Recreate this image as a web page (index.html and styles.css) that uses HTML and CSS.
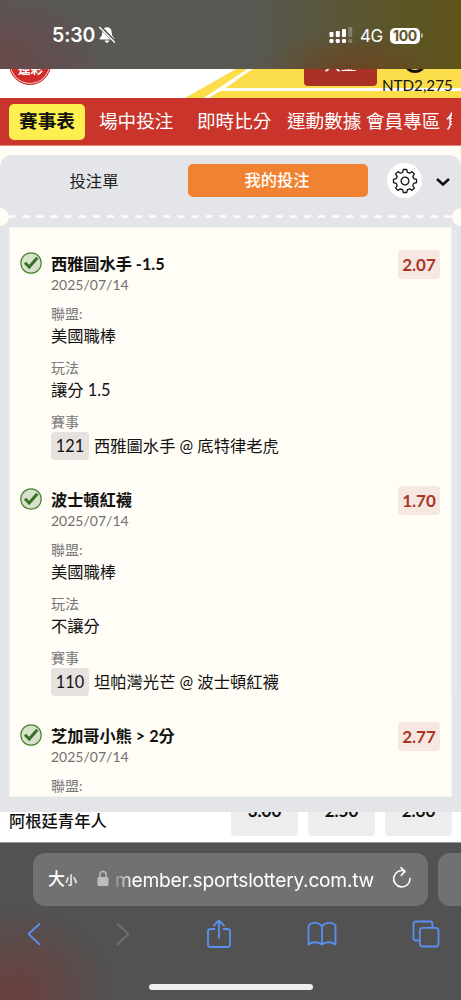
FILE: index.html
```
<!DOCTYPE html>
<html lang="zh-Hant">
<head>
<meta charset="utf-8">
<title>運彩</title>
<link rel="stylesheet" href="styles.css">
</head>
<body>
<div class="screen">
  <header class="status">
    <div class="status-left">
      <span class="clock">5:30</span>
      <svg width="18" height="18" viewBox="0 0 18 18"><path d="M9 1.2c-3 0-4.600 2-4.700 5-.1 3-.8 4.300-2.300 5.500-.8.700-.6 1.700.4 1.700h13.200c1 0 1.200-1 .4-1.700-1.500-1.200-2.200-2.500-2.300-5.500-.1-3-1.700-5-4.700-5zM6.800 14.500c.2 1.400 1 2.200 2.200 2.200s2-.8 2.200-2.200z" fill="#fff"/><path d="M2.300.8l14.200 14.800" stroke="#585854" stroke-width="3.200"/><path d="M1.500 1.200l15 15" stroke="#fff" stroke-width="1.300" stroke-linecap="round"/></svg>
    </div>
    <div class="status-right">
      <svg width="24" height="18" viewBox="0 0 24 18"><g fill="#fff"><rect x=".5" y="5" width="4" height="5" rx="1"/><rect x="6.800" y="4" width="4" height="6" rx="1"/><rect x="13" y="2" width="4" height="8" rx="1"/><rect x=".5" y="12" width="4" height="4" rx="1.300"/><rect x="6.800" y="12" width="4" height="4" rx="1.300"/><rect x="13" y="12" width="4" height="4" rx="1.300"/></g><g fill="#fff" opacity=".25"><rect x="19.300" y="0" width="4" height="10" rx="1"/><rect x="19.300" y="12" width="4" height="4" rx="1.300"/></g></svg>
      <span class="net">4G</span>
      <span class="battery">100</span><i class="battery-tip"></i>
    </div>
  </header>

  <div class="site-head">
    <svg class="head-art" width="461" height="29" viewBox="0 0 461 29"><path d="M185 29L236 0H461V29z" fill="#fadd48"/><path d="M205 30L253-2M218 22L236 10" stroke="#fff" stroke-width="3"/><path d="M218 20.500H461" stroke="#fff" stroke-width="3"/></svg>
    <div class="logo"><span>運彩</span></div>
    <span class="tagline">TAIWAN SPORTS LOTTERY</span>
    <span class="deposit">入金</span>
    <svg class="person" width="22" height="14" viewBox="0 0 22 14"><ellipse cx="11" cy="4" rx="9" ry="7.500" fill="none" stroke="#111" stroke-width="3"/></svg>
    <span class="balance">NTD2,275</span>
  </div>

  <nav class="nav">
    <div class="nav-track">
      <a class="on">賽事表</a><a class="n2">場中投注</a><a class="n3">即時比分</a><a class="n4">運動數據</a><a class="n5">會員專區</a><a class="n6">焦點</a>
    </div>
  </nav>

  <main class="sheet">
    <section class="panel">
      <div class="tabs">
        <span class="tab">投注單</span>
        <span class="tab active">我的投注</span>
        <span class="gear"><svg width="26" height="26" viewBox="-13 -13 26 26" fill="none" stroke="#151515" stroke-width="1.300" stroke-linejoin="round"><circle r="3.900"/><path d="M-1.700-11.500H1.700L2.400-8.700Q4-8.300 4.600-7.800L7-9.400L9.400-7L7.800-4.600Q8.400-3.400 8.700-2.400L11.500-1.700V1.700L8.700 2.400Q8.400 3.400 7.800 4.600L9.400 7L7 9.400L4.600 7.800Q3.400 8.400 2.400 8.700L1.700 11.500H-1.700L-2.400 8.700Q-3.400 8.400-4.600 7.800L-7 9.400L-9.400 7L-7.800 4.600Q-8.400 3.400-8.700 2.400L-11.500 1.700V-1.700L-8.700-2.400Q-8.400-3.400-7.800-4.600L-9.400-7L-7-9.400L-4.600-7.800Q-3.400-8.400-2.400-8.700z"/></svg></span>
        <svg class="chev" width="16" height="10" viewBox="0 0 16 10"><path d="M2 2L8 7.500L14 2" fill="none" stroke="#111" stroke-width="2.500"/></svg>
      </div>
      <div class="tear"><i></i><svg width="443" height="3" viewBox="0 0 443 3"><path d="M-.5 1.500H443" stroke="#fffdf5" stroke-width="2.400" stroke-dasharray="7 7.070"/></svg><i></i></div>
      <div class="card">
        <article class="bet">
          <svg class="tick" width="22" height="22" viewBox="0 0 22 22"><circle cx="11" cy="11" r="10.200" fill="#d6e2ca" stroke="#4b8436" stroke-width="1.200"/><path d="M5 10.800L9.200 15L17.300 5.800" fill="none" stroke="#39702a" stroke-width="3"/></svg>
          <div class="info">
            <h2>西雅圖水手 -1.5</h2><time>2025/07/14</time>
            <dl><dt>聯盟:</dt><dd>美國職棒</dd><dt>玩法</dt><dd>讓分 1.5</dd><dt>賽事</dt><dd class="match"><b>121</b>西雅圖水手 @ 底特律老虎</dd></dl>
          </div>
          <span class="odds">2.07</span>
        </article>
        <article class="bet">
          <svg class="tick" width="22" height="22" viewBox="0 0 22 22"><circle cx="11" cy="11" r="10.200" fill="#d6e2ca" stroke="#4b8436" stroke-width="1.200"/><path d="M5 10.800L9.200 15L17.300 5.800" fill="none" stroke="#39702a" stroke-width="3"/></svg>
          <div class="info">
            <h2>波士頓紅襪</h2><time>2025/07/14</time>
            <dl><dt>聯盟:</dt><dd>美國職棒</dd><dt>玩法</dt><dd>不讓分</dd><dt>賽事</dt><dd class="match"><b>110</b>坦帕灣光芒 @ 波士頓紅襪</dd></dl>
          </div>
          <span class="odds">1.70</span>
        </article>
        <article class="bet">
          <svg class="tick" width="22" height="22" viewBox="0 0 22 22"><circle cx="11" cy="11" r="10.200" fill="#d6e2ca" stroke="#4b8436" stroke-width="1.200"/><path d="M5 10.800L9.200 15L17.300 5.800" fill="none" stroke="#39702a" stroke-width="3"/></svg>
          <div class="info">
            <h2>芝加哥小熊 &gt; 2分</h2><time>2025/07/14</time>
            <dl><dt>聯盟:</dt></dl>
          </div>
          <span class="odds">2.77</span>
        </article>
      </div>
      <i class="scrollbar"></i>
    </section>
  </main>

  <div class="row">
    <span class="team">阿根廷青年人</span>
    <span class="price">3.00</span><span class="price">2.50</span><span class="price">2.60</span>
  </div>

  <footer class="browser">
    <div class="bars">
      <div class="address">
        <span class="size">大<small>小</small></span>
        <svg class="lock" width="12" height="17" viewBox="0 0 12 17"><path d="M3 8V4.500C3 .5 9 .5 9 4.500V8" fill="none" stroke="#bdbdc1" stroke-width="1.500"/><rect x=".5" y="7" width="11" height="9" rx="1.600" fill="#bdbdc1"/></svg>
        <span class="url">member.sportslottery.com.tw</span>
        <svg class="reload" width="20" height="24" viewBox="0 0 20 24" fill="none" stroke="#fff" stroke-width="1.600" stroke-linecap="round" stroke-linejoin="round"><path d="M18 12.500A8.200 8.200 0 1 1 12.500 5M9 1.700L13 5.400L9.300 9.300"/></svg>
      </div>
      <div class="address next"></div>
    </div>
    <div class="tools">
      <svg width="14" height="24" viewBox="0 0 14 24"><path d="M12.500 2L1.500 12L12.500 22.300" /></svg>
      <svg class="off" width="14" height="24" viewBox="0 0 14 24"><path d="M1.500 2L12.500 12L1.500 22.300"/></svg>
      <svg width="26" height="30" viewBox="0 0 26 30"><path d="M8.500 10H4.500Q2 10 2 12.500V25.500Q2 28 4.500 28H21.500Q24 28 24 25.500V12.500Q24 10 21.500 10H17.500M13 19V1.500M8 6.500L13 1.500L18 6.500"/></svg>
      <svg width="30" height="26" viewBox="0 0 30 26"><path d="M15 5.500C12.500 1 4.500.5 1.500 4.500V23.500C5 20.500 12 20.500 15 23.500C18 20.500 25 20.500 28.500 23.500V4.500C25.500.5 17.500 1 15 5.500V23.500"/></svg>
      <svg width="28" height="28" viewBox="0 0 28 28"><path d="M7.500 20.500H4Q1.500 20.500 1.500 18V4Q1.500 1.500 4 1.500H18Q20.500 1.500 20.500 4V7.500"/><rect x="7.800" y="7.800" width="18.700" height="18.700" rx="2.800"/></svg>
    </div>
    <div class="home"></div>
  </footer>
</div>
</body>
</html>
```
FILE: styles.css
```
* { box-sizing: border-box; }
body { margin: 0; font-family: Lato, "Noto Sans CJK TC", sans-serif; color: #111; }
svg { display: block; flex: none; }
.screen { width: 461px; height: 1000px; overflow: hidden; display: flex; flex-direction: column; background: #fff; }
.screen > * { flex: none; }

.status { height: 69px; display: flex; justify-content: space-between; padding: 25px 38px 0 52px; color: #fff; font-family: Inter, sans-serif;
  background: radial-gradient(ellipse 110px 70px at 0 60px, #6a484b, transparent), radial-gradient(ellipse 90px 38px at 355px 69px, #6a4522, transparent), linear-gradient(90deg, transparent 52%, #5d5417 100%), #585854; }
.status-left, .status-right { display: flex; align-items: center; height: 20px; }
.clock { font-size: 19.5px; font-weight: 600; width: 46px; letter-spacing: -.1px; }
.status-right { padding-top: 1px; }
.net { font-size: 17px; margin: 0 7px 0 7px; width: 23px; letter-spacing: -.6px; }
.battery { width: 30px; height: 16px; line-height: 16px; border-radius: 5px; background: #fff; color: #5e5529; font-size: 14px; font-weight: 700; text-align: center; letter-spacing: -.3px; }
.battery-tip { width: 2px; height: 5px; margin-left: 1px; border-radius: 0 2px 2px 0; background: #b8b49c; }

.site-head { position: relative; height: 29px; overflow: hidden; background: #fff; }
.head-art { position: absolute; left: 0; top: 0; }
.logo { position: absolute; left: 9px; top: -26px; width: 42px; height: 42px; border-radius: 50%; background: #cf2c29; border: 1px solid #cf2c29; box-shadow: inset 0 0 0 1px #f3c7c4; color: #fff; }
.logo span { position: absolute; left: 8px; top: 17px; width: 28px; font-size: 12.5px; font-weight: 700; line-height: 18px; }
.tagline { position: absolute; left: 59px; top: -6px; font-size: 6px; line-height: 8px; white-space: nowrap; font-weight: 700; color: #333; }
.deposit { position: absolute; left: 304px; top: -20px; width: 73px; height: 37px; border-radius: 4px; background: #a93225; color: #fff; font-size: 16px; line-height: 30px; padding-top: 0; text-align: center; }
.person { position: absolute; left: 404px; top: -9px; }
.balance { position: absolute; left: 382px; top: 7px; font-size: 15.2px; line-height: 18px; color: #111; }

.nav { height: 48px; padding: 6px 9px 0; background: #c9342b; border-bottom: 1px solid #e18980; }
.nav-track { display: flex; overflow: hidden; white-space: nowrap; height: 36px; line-height: 35px; font-size: 18.6px; color: #fff; }
.nav-track a { flex: none; }
.nav-track .on { width: 76px; text-align: center; border-radius: 5px; background: #fdef50; color: #111; font-weight: 700; }
.n2 { margin-left: 14px; width: 98px; }
.n3 { width: 90px; }
.n4 { width: 79px; }
.n5 { width: 80px; }

.sheet { height: 666px; padding-top: 9px; background: #fffdf5; }
.panel { position: relative; height: 657px; background: #e3e5e8; border-radius: 12px 12px 0 0; overflow: hidden; }
.tabs { display: flex; align-items: center; height: 51px; font-size: 16.3px; }
.tab { width: 188px; text-align: center; line-height: 32px; color: #222; }
.tab.active { width: 180px; height: 33px; padding-right: 9px; border-radius: 5px; background: #f08231; color: #fff; font-weight: 500; padding-left: 7px; margin-right: 19px; }
.gear { width: 35px; height: 35px; display: grid; place-items: center; border-radius: 50%; background: #fff; }
.chev { margin-left: 13px; margin-top: 2px; }
.tear { display: flex; align-items: center; height: 21px; }
.tear i { flex: none; width: 18px; height: 18px; border-radius: 50%; background: #fffdf5; }
.tear i:first-child { margin-left: -9px; }
.card { width: 443px; height: 570px; margin-left: 9px; padding: 24px 11px 0 10px; background: #fffdf5; overflow: hidden; border: 1px solid #f2f2f0; }
.bet { display: flex; height: 208px; margin-bottom: 28px; }
.tick { margin: 0 9px 0 0; }
.info { flex: 1; white-space: nowrap; }
h2 { margin: 0; height: 24px; line-height: 24px; font-size: 16.2px; font-weight: 700; }
time { display: block; height: 18px; line-height: 18px; font-size: 14px; color: #717171; }
dl { margin: 10px 0 0; }
dt { height: 19px; line-height: 19px; font-size: 14px; color: #777; }
dd { height: 26px; line-height: 26px; margin: 0 0 9px; font-size: 16.3px; }
.match { display: flex; height: 28px; line-height: 28px; margin-top: 1px; }
.match b { width: 38px; margin-right: 5px; text-align: center; border-radius: 4px; background: #e6e3de; font-weight: 400; }
.odds { width: 42px; height: 29px; line-height: 30px; margin-top: -2px; border-radius: 4px; background: #f6e8e1; color: #ab3427; font-size: 17px; font-weight: 700; text-align: center; }
.scrollbar { position: absolute; right: 4px; top: 76px; width: 3px; height: 464px; background: #e9eaec; }

.row { height: 30px; display: flex; align-items: flex-start; gap: 10px; padding-left: 9px; overflow: hidden; background: #fff; }
.team { width: 212px; line-height: 18px; font-size: 16.3px; font-weight: 500; }
.price { width: 67px; height: 38px; margin-top: -14px; border-radius: 4px; background: #ededed; text-align: center; font-size: 17px; font-weight: 700; line-height: 26px; }

.browser { height: 158px; padding-top: 10px; border-top: 1px solid #999; background: radial-gradient(ellipse 95px 85px at 18px 148px, #69403f, transparent), #525252; color: #fff; }
.bars { display: flex; gap: 10px; margin-left: 33px; overflow: hidden; }
.address { flex: none; display: flex; align-items: center; width: 395px; height: 53px; padding-left: 15px; border-radius: 12px; background: #717171; }
.size { width: 49px; font-size: 17px; font-weight: 500; line-height: 24px; }
.size small { font-size: 12px; }
.lock { margin-top: -2px; }
.url { width: 263px; margin-left: 6px; font-family: Inter, sans-serif; font-size: 19.2px; letter-spacing: -.25px; white-space: nowrap; -webkit-mask-image: linear-gradient(90deg, rgba(0,0,0,.2), #000 18px); mask-image: linear-gradient(90deg, rgba(0,0,0,.2), #000 18px); }
.reload { margin-left: 14px; margin-top: -3px; }
.tools { display: flex; align-items: center; justify-content: space-between; height: 56px; padding: 0 21px 0 27px; fill: none; stroke: #5a8ff0; stroke-width: 1.8; stroke-linecap: round; stroke-linejoin: round; }
.off { stroke: #707070; }
.home { width: 164px; height: 6px; margin: 22px 0 0 149px; border-radius: 3px; background: #eee; }
```
